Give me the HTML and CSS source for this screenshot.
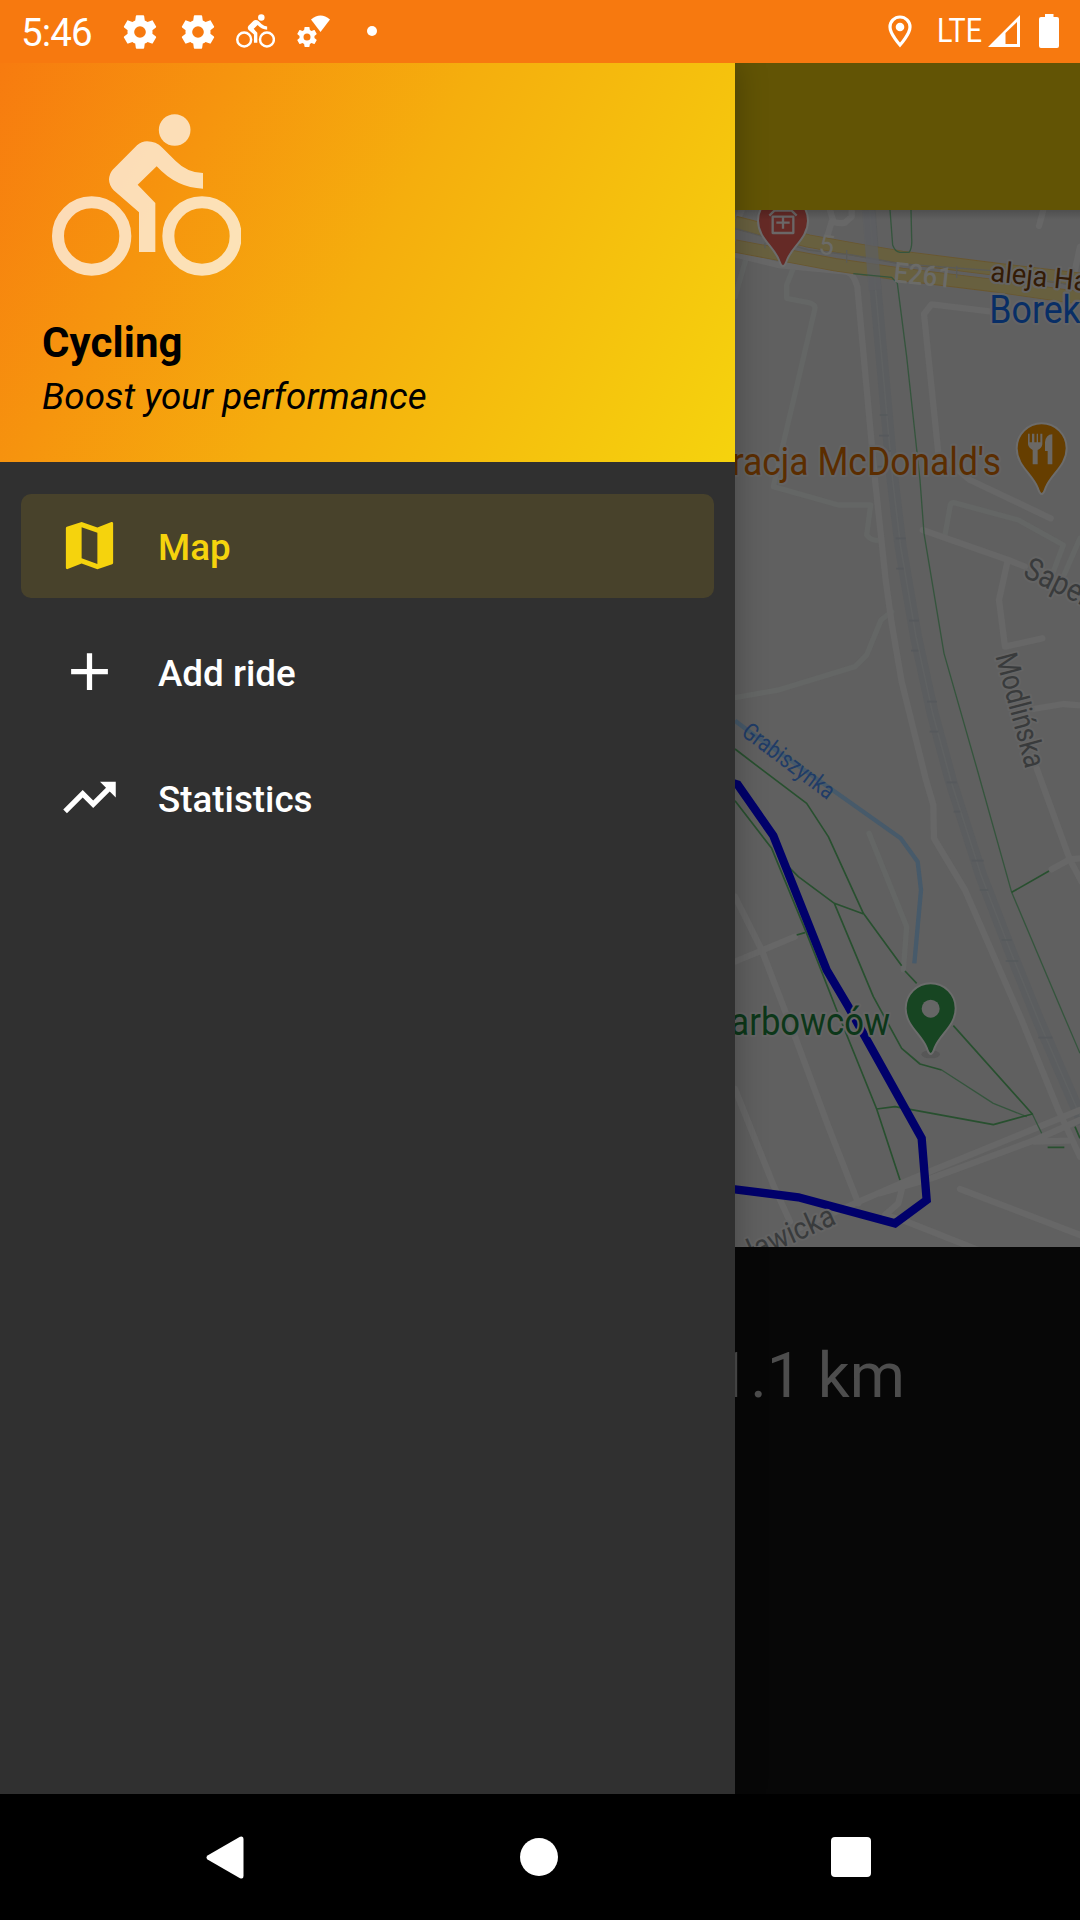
FILE: index.html
```html
<!DOCTYPE html>
<html lang="en">
<head>
<meta charset="utf-8">
<title>Cycling</title>
<link rel="stylesheet" href="styles.css">
</head>
<body>
<svg class="defs" aria-hidden="true">
  <symbol id="bike" viewBox="156 161 567 486">
    <circle cx="275" cy="527" r="101" fill="none" stroke="currentColor" stroke-width="36"/>
    <circle cx="606" cy="527" r="101" fill="none" stroke="currentColor" stroke-width="36"/>
    <circle cx="524" cy="209" r="47.5"/>
    <path d="M417 575V456L341 390Q327 375 327 357Q328 340 338 328L411 255Q425 243 441 243Q468 243 487 262L527 302Q563 338 609 338V385Q530 383 470 318L413 373L466 428V575Z"/>
  </symbol>
  <symbol id="gear" viewBox="0 0 24 24">
    <path fill-rule="evenodd" d="M19.43 12.98c.04-.32.07-.64.07-.98s-.03-.66-.07-.98l2.11-1.65c.19-.15.24-.42.12-.64l-2-3.46c-.12-.22-.39-.3-.61-.22l-2.49 1c-.52-.4-1.08-.73-1.69-.98l-.38-2.65C14.46 2.18 14.25 2 14 2h-4c-.25 0-.46.18-.49.42l-.38 2.65c-.61.25-1.17.59-1.69.98l-2.49-1c-.23-.09-.49 0-.61.22l-2 3.46c-.13.22-.07.49.12.64l2.11 1.65c-.04.32-.07.65-.07.98s.03.66.07.98l-2.11 1.65c-.19.15-.24.42-.12.64l2 3.46c.12.22.39.3.61.22l2.49-1c.52.4 1.08.73 1.69.98l.38 2.65c.03.24.24.42.49.42h4c.25 0 .46-.18.49-.42l.38-2.65c.61-.25 1.17-.59 1.69-.98l2.49 1c.23.09.49 0 .61-.22l2-3.46c.12-.22.07-.49-.12-.64l-2.11-1.65zM12 15.5a3.5 3.5 0 1 1 0-7 3.5 3.5 0 0 1 0 7z"/>
  </symbol>
  <symbol id="pin" viewBox="-90 -90 180 240" overflow="visible">
    <path d="M0 137C-7 137-8 128-12 118C-27 78-75 52-75 0A75 75 0 0 1 75 0C75 52 27 78 12 118C8 128 7 137 0 137Z"/>
  </symbol>
</svg>

<header class="status">
  <span class="time">5:46</span>
  <svg class="gear" viewBox="0 0 24 24"><use href="#gear"/></svg>
  <svg class="gear gear-next" viewBox="0 0 24 24"><use href="#gear"/></svg>
  <svg class="ride"><use href="#bike"/></svg>
  <svg class="network" viewBox="0 0 34 34"><use href="#gear" x="-2" y="10" width="24" height="24"/><path d="M23.5 17L14 4.5Q23.500-3.500 33 4.500Z"/></svg>
  <i class="more"></i>
  <svg class="location" viewBox="0 0 24 34"><path d="M12 2C6.500 2 2 6.500 2 12C2 19 12 30 12 30S22 19 22 12C22 6.500 17.500 2 12 2Z" fill="none" stroke="currentColor" stroke-width="3.200"/><circle cx="12" cy="12" r="4.300"/></svg>
  <svg class="lte" viewBox="0 0 48 40"><text x="1" y="29" textLength="45" lengthAdjust="spacingAndGlyphs">LTE</text></svg>
  <svg class="signal" viewBox="0 0 32 32"><path fill-rule="evenodd" d="M0 32L32 0V32ZM17.500 18L29 7V29H17.500Z"/></svg>
  <svg class="battery" viewBox="0 0 20 34"><path d="M6 0H14.500V3H18Q20 3 20 5V32Q20 34 18 34H2Q0 34 0 32V5Q0 3 2 3H6Z"/></svg>
</header>

<main class="screen">
  <div class="toolbar"></div>
  <svg class="map" viewBox="-2175 60 3240 3111">
    <defs>
      <linearGradient id="under-bar" x1="0" y1="0" x2="0" y2="1"><stop offset="0" stop-color="#000" stop-opacity=".18"/><stop offset="1" stop-color="#000" stop-opacity="0"/></linearGradient>
    </defs>
    <g class="rail">
      <path class="rail-bed" d="M434 60L452 300L503 870L527 1070L573 1340L623 1570L677 1770L768 2055L855 2280L940 2490L1005 2640L1075 2800"/>
      <path class="rail-line" d="M434 60L452 300L503 870L527 1070L573 1340L623 1570L677 1770L768 2055L855 2280L940 2490L1005 2640L1075 2800"/>
      <path class="rail-ties" d="M512 1045H542M514 1136H536M552 1292H582M558 1382H580M606 1535H636M614 1625H640M665 1777H695M686 1865H706M740 2012H776M764 2100H790M830 2250H860M842 2313H880M940 2543H982M464 675H488M462 737H492M472 783H498M458 830H482"/>
    </g>
    <g class="minor">
      <path d="M205 235L185 285V325L235 335Q272 340 270 355L175 760L145 890L340 945H437L425 1035Q440 1055 465 1050"/>
      <path d="M660 1035L676 945Q680 935 695 940L880 990L1015 1065L985 1145M1065 1045L1015 1160M65 200L30 320"/>
      <path d="M30 1523L160 1500L390 1430L425 1395L468 1290L500 1265M432 1930L545 2210L535 2340"/>
    </g>
    <g class="road-edge">
      <path id="roads" d="M30 193L160 225L365 245Q385 250 397 290L450 870L482 1170L500 1300L530 1475L603 1770L625 1845L627 1945L720 2100L890 2490L1000 2760L1065 2900M800 365L620 343L597 372L640 790L735 870L977 985M593 1020L850 1110L900 1130M848 1112L822 1230L840 1370L952 1345M925 1557L1015 1542L1065 1546M935 1735L1035 2010L1070 2075M980 2038L1035 2008L1065 2005M30 2120L110 2280L210 2540L310 2810L400 3040M30 2315L210 2240M30 2697L145 2985L195 3095M30 3200L390 3040L540 2975L1065 2760M465 3010L620 2965L930 2850L1065 2790M530 3000L520 3040L480 3075L540 3093L760 3180M705 2997L1065 3135M955 60L942 108M1050 240L1065 170M315 60L325 95Q345 102 360 98L380 80V60M320 95L305 145M42 80L50 60M930 2855L1030 2852M240 225L380 248"/>
    </g>
    <path class="highway-gap" d="M30 130L250 177L400 206L530 225L800 255L1065 285"/>
    <path class="highway-edge" d="M30 97L250 153L400 180L530 202L800 236L1065 268M30 168L330 224L530 253L800 286L1065 324"/>
    <path class="highway" d="M30 97L250 153L400 180L530 202L800 236L1065 268M30 168L330 224L530 253L800 286L1065 324"/>
    <path class="highway-line" d="M30 115L250 180L380 195L530 222L800 242L1065 290M365 180V218M695 228V264M120 158V175"/>
    <path class="rail-cross" d="M430 60L450 300"/>
    <g class="trail faint">
      <path d="M495 60L503 165Q510 185 525 187L552 187Q562 175 560 145L558 60M385 251L500 262L517 280L545 500L585 870L597 1030L657 1390L757 1740L860 2107L1020 2485L1065 2590"/>
      <path d="M650 2640L805 2740L905 2780M922 2772L950 2830"/>
    </g>
    <g class="trail">
      <path d="M30 1677L115 1742L245 1840L310 1940L415 2170L530 2327M540 2343L575 2380M190 2030L220 2060L328 2140L418 2173M328 2140L445 2420L530 2575L585 2622L650 2640M30 1832L140 1975L245 2230L335 2460L455 2757L525 2970M455 2757L510 2750L805 2804L922 2772L685 2507M860 2107L972 2043M968 2872H1018M1050 2810L1065 2845M215 2235L240 2228"/>
    </g>
    <path class="water" d="M30 1592L70 1622L330 1805L527 1945L578 2015L588 2100L568 2320"/>
    <path class="route" d="M0 1772L38 1784L145 1937L305 2340L370 2450L590 2845L605 3030L510 3100L220 3022L30 2998L-40 2990"/>

    <use class="pin pin-red" href="#pin" x="84" y="2" width="180" height="240"/>
    <path class="glyph" d="M143 80H205V129H143ZM133 77L148 62H200L215 77M174 80V116M154 98H194"/>
    <use class="pin pin-orange" href="#pin" x="860" y="685" width="180" height="240"/>
    <path class="cutlery" d="M909 731H914V757H921V731H928V757H935V731H939V757H946V731H952V763Q950 776 938 780V823H923V780Q911 774 909 763ZM982 733V823H968V783H960V757Q962 734 982 733Z"/>
    <ellipse class="pin-shadow" cx="617" cy="2593" rx="28" ry="12"/>
    <use class="pin pin-green" href="#pin" x="527" y="2365" width="180" height="240"/>
    <circle class="pin-hole" cx="617" cy="2456" r="27"/>

    <g class="labels">
      <text class="shield" x="278" y="190" font-size="82" transform="rotate(8 278 190)">5</text>
      <text class="shield" x="503" y="276" font-size="86" font-weight="500" textLength="176" lengthAdjust="spacingAndGlyphs" transform="rotate(6 503 276)">E261</text>
      <text class="street-main" x="794" y="273" font-size="86" textLength="295" lengthAdjust="spacingAndGlyphs" transform="rotate(6 794 273)">aleja Ha</text>
      <text class="borek" x="793" y="398" font-size="115" textLength="274" lengthAdjust="spacingAndGlyphs">Borek</text>
      <text class="food" x="20" y="855" font-size="115" textLength="808" lengthAdjust="spacingAndGlyphs">racja McDonald's</text>
      <text class="street" x="890" y="1158" font-size="95" textLength="212" lengthAdjust="spacingAndGlyphs" transform="rotate(26 890 1158)">Saper</text>
      <text class="street" x="811" y="1398" font-size="92" textLength="352" lengthAdjust="spacingAndGlyphs" transform="rotate(75 811 1398)">Modlińska</text>
      <text class="stream" x="46" y="1634" font-size="73" textLength="327" lengthAdjust="spacingAndGlyphs" transform="rotate(37 46 1634)">Grabiszynka</text>
      <text class="park" x="16" y="2535" font-size="115" textLength="479" lengthAdjust="spacingAndGlyphs">arbowców</text>
      <text class="street" x="337" y="3100" font-size="92" text-anchor="end" textLength="322" lengthAdjust="spacingAndGlyphs" transform="rotate(-24 337 3100)">cławicka</text>
    </g>
    <rect x="30" y="60" width="1035" height="30" fill="url(#under-bar)"/>
  </svg>
  <section class="stats"><p class="distance">1.1 km</p></section>

  <aside class="drawer">
    <div class="hero">
      <svg class="logo"><use href="#bike"/></svg>
      <h1>Cycling</h1>
      <p>Boost your performance</p>
    </div>
    <nav class="menu">
      <a class="item active"><svg viewBox="0 0 24 24"><path d="M20.500 3l-.16.03L15 5.100 9 3 3.360 4.900c-.21.07-.36.25-.36.48V20.500c0 .28.22.5.5.5l.16-.03L9 18.900l6 2.100 5.640-1.900c.21-.07.36-.25.36-.48V3.500c0-.28-.22-.5-.5-.5zM15 19l-6-2.110V5l6 2.110V19z"/></svg><span>Map</span></a>
      <a class="item"><svg viewBox="0 0 24 24"><path d="M19 13h-6v6h-2v-6H5v-2h6V5h2v6h6v2z"/></svg><span>Add ride</span></a>
      <a class="item"><svg viewBox="0 0 24 24"><path d="M16 6l2.290 2.290-4.880 4.880-4-4L2 16.590 3.410 18l6-6 4 4 6.300-6.290L22 12V6z"/></svg><span>Statistics</span></a>
    </nav>
  </aside>
</main>

<footer class="navbar">
  <svg class="back" viewBox="0 0 38 43"><path d="M34 .8Q37.500-.5 37.500 3V40Q37.500 43.500 34 42.200L1.500 23.500Q-.5 21.500 1.500 19.500Z"/></svg>
  <i class="home"></i>
  <i class="recents"></i>
</footer>
</body>
</html>
```
FILE: styles.css
```css
* { box-sizing: border-box; }

body {
  margin: 0;
  width: 1080px;
  height: 1920px;
  display: flex;
  flex-direction: column;
  overflow: hidden;
  background: #000;
  font-family: Roboto, "Liberation Sans", sans-serif;
}

svg { display: block; flex: none; fill: currentColor; }
.defs { position: absolute; width: 0; height: 0; }
h1, p { margin: 0; font-weight: 400; }

/* Status bar */
.status {
  height: 63px;
  flex: none;
  display: flex;
  align-items: flex-start;
  padding: 14px 21px 0 21px;
  background: #f7790f;
  color: #fff;
}
.time { width: 99px; margin-top: -3px; font-size: 38.500px; line-height: 44px; letter-spacing: -.9px; }
.gear { width: 40px; height: 40px; margin-top: -2px; }
.gear-next { margin-left: 18px; }
.ride { width: 39px; height: 34px; margin-left: 18px; }
.network { width: 34px; height: 34px; margin-left: 22px; margin-top: 1px; }
.more { width: 10px; height: 10px; margin: 12px 0 0 36px; border-radius: 50%; background: #fff; }
.location { width: 24px; height: 34px; margin-left: auto; margin-top: 1px; }
.lte { width: 48px; height: 40px; margin: -1px -2px 0 24px; font-size: 33px; }
.signal { width: 32px; height: 32px; margin-left: 6px; margin-top: 1px; }
.battery { width: 20px; height: 34px; margin-left: 19px; }

/* Content beneath the drawer */
.screen {
  position: relative;
  flex: 1;
  display: flex;
  flex-direction: column;
  overflow: hidden;
  background: #070707;
}
.toolbar { height: 147px; flex: none; background: #625405; }
.map { width: 1080px; height: 1037px; background: #606060; fill: none; }
.stats { padding: 92px 175px 0 0; text-align: right; color: #4d4d4d; }
.distance { font-size: 63px; line-height: 74px; }

/* Map layers */
.map path { stroke-linejoin: round; }
.map .rail-bed { stroke: #5b5d5f; stroke-width: 36; }
.map .rail-line { stroke: #5f6162; stroke-width: 5; }
.map .rail-ties { stroke: #56595c; stroke-width: 5; }
.map .rail-cross { stroke: #5d5f61; stroke-width: 38; opacity: .75; }
.minor { stroke: #646665; stroke-width: 16; stroke-linecap: round; }
.road-edge { stroke: #676767; stroke-width: 19; stroke-linecap: round; }
.map .highway-gap { stroke: #606060; stroke-width: 64; }
.map .highway-edge { stroke: #6a572f; stroke-width: 40; }
.map .highway { stroke: #68603f; stroke-width: 35; }
.map .highway-line { stroke: #5a5a57; stroke-width: 4; }
.trail { stroke: #28502f; stroke-width: 5; }
.trail.faint { stroke: #35553d; stroke-width: 4; }
.water { stroke: #475a6a; stroke-width: 13; }
.map .route { stroke: #00006b; stroke-width: 25; stroke-linejoin: miter; }
.pin { stroke: #6c6c6c; stroke-width: 6; }
.pin-red { fill: #652a26; }
.pin-orange { fill: #663e00; }
.pin-green { fill: #174522; }
.pin-shadow { fill: #575757; }
.pin-hole { fill: #666; }
.glyph { stroke: #6b6767; stroke-width: 7; }
.cutlery { fill: #6b6864; }
.labels text { stroke: #646464; stroke-width: 13; stroke-linejoin: round; paint-order: stroke; }
.labels .shield { fill: #6b6b68; stroke: none; }
.street-main { fill: #341b05; }
.borek { fill: #082e66; }
.food { fill: #5b2d00; }
.street { fill: #393b3c; }
.labels .stream { fill: #203c67; stroke: none; }
.park { fill: #0c3719; }

/* Navigation drawer */
.drawer {
  position: absolute;
  inset: 0 auto 0 0;
  width: 735px;
  background: #303030;
  box-shadow: 0 0 30px rgba(0, 0, 0, .28);
}
.hero {
  height: 399px;
  padding: 51px 42px 0;
  background: linear-gradient(118.500deg, #f77b0f 0%, #f5ae0d 50%, #f5d30d 100%);
  color: #000;
}
.logo { width: 189px; height: 162px; margin-left: 10px; color: #fff; opacity: .7; }
.hero h1 { margin-top: 42px; font-size: 42px; line-height: 49px; font-weight: 700; letter-spacing: .1px; }
.hero p { margin-top: 8px; font-size: 36.750px; line-height: 43px; font-style: italic; letter-spacing: .05px; }
.menu { display: flex; flex-direction: column; gap: 22px; padding: 32px 21px; }
.item {
  height: 104px;
  display: flex;
  align-items: center;
  gap: 37px;
  padding-left: 37px;
  border-radius: 10px;
  color: #fff;
  font-size: 36.750px;
  font-weight: 500;
}
.item svg { width: 63px; height: 63px; margin-bottom: 1px; }
.item span { padding-top: 2px; }
.item.active { background: #48422b; color: #f5d30d; }

/* System navigation */
.navbar {
  height: 126px;
  flex: none;
  display: flex;
  align-items: center;
  justify-content: space-between;
  padding: 0 209px 0 206px;
  background: #000;
  color: #fff;
}
.back { width: 38px; height: 43px; }
.home { width: 38px; height: 38px; margin-left: 3px; border-radius: 50%; background: #fff; }
.recents { width: 40px; height: 40px; border-radius: 4px; background: #fff; }
```
